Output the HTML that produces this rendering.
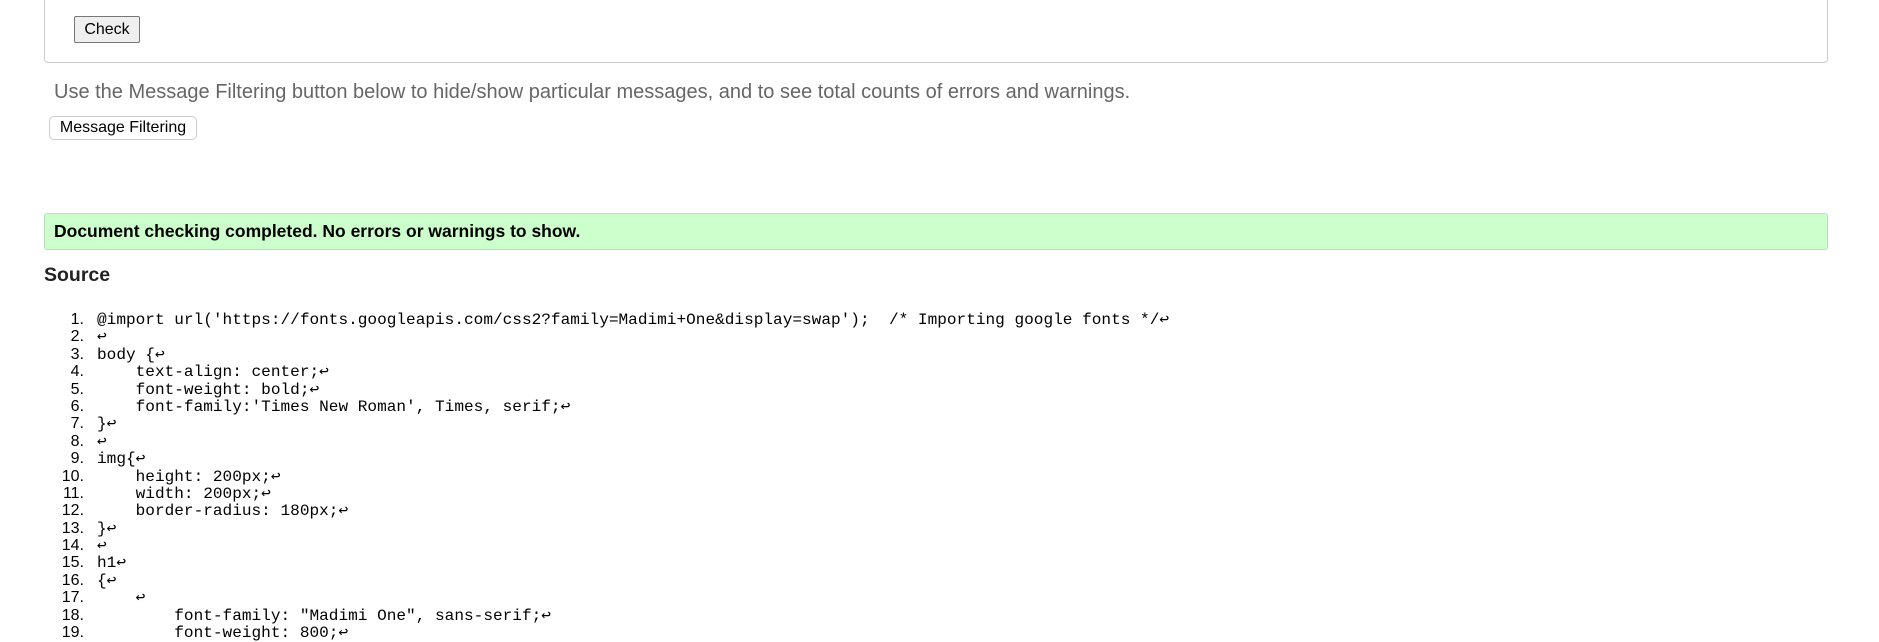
<!DOCTYPE html>
<html><head><meta charset="utf-8"><style>
body{margin:0;width:1879px;height:640px;overflow:hidden;background:#fff;font-family:"Liberation Sans",Arial,sans-serif;position:relative}
.box{position:absolute;left:44px;top:-10px;width:1782px;height:71px;border:1px solid #ccc;border-radius:4px}
.btn{position:absolute;font-family:"Liberation Sans",Arial,sans-serif;font-size:16px;color:#000;box-sizing:border-box;display:flex;align-items:center;justify-content:center}
#check{left:74px;top:16px;width:66px;height:27px;background:#efefef;border:1px solid #767676;border-radius:2px}
#mf{left:49px;top:116px;width:148px;height:24px;background:#fff;border:1px solid #ccc;border-radius:5px}
.use{position:absolute;left:54px;top:81px;font-size:20px;color:#666;white-space:nowrap}
.ok{position:absolute;left:44px;top:213px;width:1784px;height:37px;box-sizing:border-box;background:#ccffcc;border:1px solid #bbddbb;border-radius:3px;font-weight:bold;font-size:17.5px;padding-left:9px;line-height:34px}
.src{position:absolute;left:44px;top:264px;font-weight:bold;font-size:19.5px;color:#222}
.code{position:absolute;left:0;top:311px;font-family:"Liberation Mono","DejaVu Sans Mono",monospace;font-size:16.1px;line-height:17.4px;color:#000}
.code div{display:flex;align-items:baseline;height:17.4px}
.code .c{white-space:pre}
.code .n{width:97px;text-align:right;padding-right:13px;box-sizing:border-box;font-family:"Liberation Sans",Arial,sans-serif;font-size:16px}
</style></head><body>
<div class="box"></div>
<div class="btn" id="check">Check</div>
<div class="use">Use the Message Filtering button below to hide/show particular messages, and to see total counts of errors and warnings.</div>
<div class="btn" id="mf">Message Filtering</div>
<div class="ok">Document checking completed. No errors or warnings to show.</div>
<div class="src">Source</div>
<div class="code"><div><span class="n">1.</span><span class="c">@import url('https://fonts.googleapis.com/css2?family=Madimi+One&amp;display=swap');  /* Importing google fonts */↩</span></div><div><span class="n">2.</span><span class="c">↩</span></div><div><span class="n">3.</span><span class="c">body {↩</span></div><div><span class="n">4.</span><span class="c">    text-align: center;↩</span></div><div><span class="n">5.</span><span class="c">    font-weight: bold;↩</span></div><div><span class="n">6.</span><span class="c">    font-family:'Times New Roman', Times, serif;↩</span></div><div><span class="n">7.</span><span class="c">}↩</span></div><div><span class="n">8.</span><span class="c">↩</span></div><div><span class="n">9.</span><span class="c">img{↩</span></div><div><span class="n">10.</span><span class="c">    height: 200px;↩</span></div><div><span class="n">11.</span><span class="c">    width: 200px;↩</span></div><div><span class="n">12.</span><span class="c">    border-radius: 180px;↩</span></div><div><span class="n">13.</span><span class="c">}↩</span></div><div><span class="n">14.</span><span class="c">↩</span></div><div><span class="n">15.</span><span class="c">h1↩</span></div><div><span class="n">16.</span><span class="c">{↩</span></div><div><span class="n">17.</span><span class="c">    ↩</span></div><div><span class="n">18.</span><span class="c">        font-family: "Madimi One", sans-serif;↩</span></div><div><span class="n">19.</span><span class="c">        font-weight: 800;↩</span></div></div>
</body></html>
